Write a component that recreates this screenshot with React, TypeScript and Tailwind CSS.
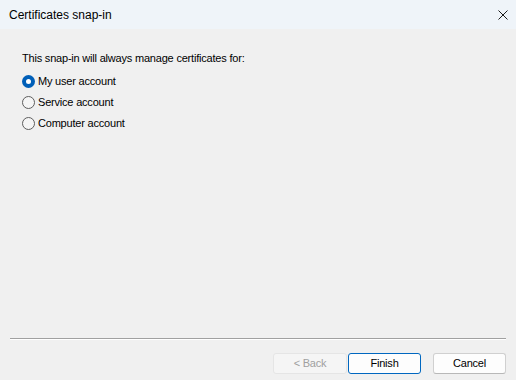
import { useState } from "react";

const options = ["My user account", "Service account", "Computer account"];

const Radio = ({ checked }: { checked: boolean }) =>
  checked ? (
    <span className="w-[13px] h-[13px] rounded-full bg-[#005fb8] flex items-center justify-center shrink-0">
      <span className="w-[5px] h-[5px] rounded-full bg-white" />
    </span>
  ) : (
    <span className="w-[13px] h-[13px] rounded-full border border-[#5e5e5e] bg-[#f5f5f5] shrink-0" />
  );

export default function App() {
  const [selected, setSelected] = useState(0);

  return (
    <div className="w-[516px] h-[380px] flex flex-col bg-[#f0f0f0] text-[11px] tracking-[-0.2px] text-black font-['Liberation_Sans',Arial,sans-serif] overflow-hidden">
      {/* title bar */}
      <div className="h-[29px] bg-[#eff4f9] flex items-center justify-between pl-[9px] pr-[9px] shrink-0 text-[12px] tracking-normal">
        <span>Certificates snap-in</span>
        <svg width="10" height="10" viewBox="0 0 10 10" className="text-[#1a1a1a] mr-[-1px]">
          <path d="M0.5 0.5 L9.5 9.5 M9.5 0.5 L0.5 9.5" stroke="currentColor" strokeWidth="1" />
        </svg>
      </div>

      {/* content */}
      <div className="flex-1 flex flex-col pl-[22px] pt-[22px]">
        <p className="leading-[14px] mb-[10px]">This snap-in will always manage certificates for:</p>
        <div className="flex flex-col gap-[8px]">
          {options.map((o, i) => (
            <label key={o} className="flex items-center gap-[3px] h-[13px] cursor-default" onClick={() => setSelected(i)}>
              <Radio checked={selected === i} />
              <span className="leading-[13px]">{o}</span>
            </label>
          ))}
        </div>
      </div>

      {/* footer */}
      <div className="shrink-0 px-[10px]">
        <div className="h-px bg-[#a0a0a0]" />
        <div className="h-px bg-white" />
      </div>
      <div className="shrink-0 h-[40px] flex items-start justify-end pt-[13px] pr-[10px]">
        <button className="w-[74px] h-[21px] rounded-[3px] border border-[#e5e5e5] bg-[#f5f5f5] text-[#a0a0a0]">
          &lt; Back
        </button>
        <button className="ml-[1px] w-[73px] h-[21px] rounded-[3px] border border-[#0067c0] bg-[#fdfdfd]">
          Finish
        </button>
        <button className="ml-[12px] w-[73px] h-[21px] rounded-[3px] border border-[#d0d0d0] border-b-[#b8b8b8] bg-[#fdfdfd]">
          Cancel
        </button>
      </div>
    </div>
  );
}
